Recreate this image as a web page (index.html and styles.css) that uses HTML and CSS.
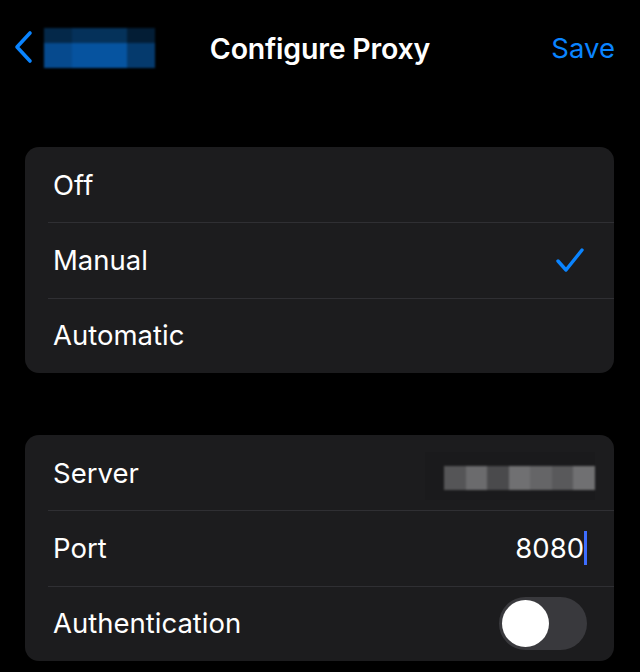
FILE: index.html
```html
<!DOCTYPE html>
<html>
<head>
<meta charset="utf-8">
<link rel="stylesheet" href="styles.css">
</head>
<body>
<div class="screen">
  <header class="nav">
    <div class="nav-left">
      <svg class="chevron" width="22" height="34" viewBox="0 0 22 34"><path d="M18 3 L5 17 L18 31" fill="none" stroke="#0a84ff" stroke-width="3.6" stroke-linecap="round" stroke-linejoin="round"/></svg>
      <div class="blur-blue">
        <div class="bb-row top"><span class="c1"></span><span class="c2"></span><span class="c3"></span><span class="c4"></span></div>
        <div class="bb-row bot"><span class="c5"></span><span class="c6"></span><span class="c7"></span><span class="c8"></span></div>
      </div>
    </div>
    <div class="nav-title">Configure Proxy</div>
    <div class="nav-save">Save</div>
  </header>

  <section class="group first">
    <div class="row"><span class="label">Off</span></div>
    <div class="row"><span class="label">Manual</span>
      <svg class="check" width="30" height="28" viewBox="0 0 30 28"><path d="M3 15 L11 24 L27 4" fill="none" stroke="#0a84ff" stroke-width="3.4" stroke-linecap="round" stroke-linejoin="round"/></svg>
    </div>
    <div class="row"><span class="label">Automatic</span></div>
  </section>

  <section class="group second">
    <div class="row"><span class="label">Server</span>
      <div class="server-box"><div class="server-blur"><span class="g1"></span><span class="g2"></span><span class="g3"></span><span class="g4"></span><span class="g5"></span><span class="g6"></span><span class="g7"></span></div></div>
    </div>
    <div class="row"><span class="label">Port</span>
      <span class="value">8080<span class="cursor"></span></span>
    </div>
    <div class="row"><span class="label">Authentication</span>
      <div class="toggle"><div class="knob"></div></div>
    </div>
  </section>
</div>
</body>
</html>
```
FILE: styles.css
```css
html, body {
  margin: 0;
  padding: 0;
  background: #000;
}
.screen {
  width: 640px;
  height: 672px;
  overflow: hidden;
  background: #000;
  font-family: Inter, "Noto Sans", sans-serif;
  color: #fff;
}
.nav {
  display: grid;
  grid-template-columns: 1fr auto 1fr;
  align-items: center;
  padding: 0 26px 0 12px;
  box-sizing: border-box;
  height: 96px;
}
.nav-left {
  display: flex;
  align-items: center;
  gap: 10px;
}
.chevron { display: block; margin-top: -2px; }
.blur-blue {
  width: 111px;
  height: 40px;
  display: flex;
  flex-direction: column;
  filter: blur(1px);
}
.bb-row { display: flex; flex: 1; }
.bb-row span { flex: 1; }
.bb-row.top { flex: 0 0 15px; }
.c1 { background: #042849; }
.c2 { background: #05315a; }
.c3 { background: #05325a; }
.c4 { background: #031d35; }
.c5 { background: #064a8e; }
.c6 { background: #06539f; }
.c7 { background: #0654a0; }
.c8 { background: #053a6d; }
.nav-title {
  font-size: 28.5px;
  font-weight: 600;
  letter-spacing: -0.2px;
  text-align: center;
  margin-left: 14px;
}
.nav-save {
  text-align: right;
  font-size: 27.5px;
  color: #0a84ff;
  margin-right: -1px;
}
.group {
  margin: 0 26px 0 25px;
  background: #1c1c1e;
  border-radius: 14px;
  overflow: hidden;
}
.group.first { margin-top: 51px; }
.group.second { margin-top: 62px; }
.row {
  height: 75.33px;
  display: flex;
  align-items: center;
  justify-content: space-between;
  padding: 0 27px 0 28px;
  box-sizing: border-box;
  position: relative;
}
.row + .row::before {
  content: "";
  position: absolute;
  top: 0;
  left: 23px;
  right: 0;
  height: 1px;
  background: #2f2f33;
}
.label {
  font-size: 27.5px;
  color: #fff;
}
.check { display: block; margin-right: 2px; }
.server-box {
  width: 170px;
  height: 48px;
  background: #1a1a1c;
  display: flex;
  align-items: center;
  justify-content: flex-end;
  margin-right: -8px;
  margin-top: 6px;
}
.server-blur {
  width: 151px;
  height: 24px;
  display: flex;
  filter: blur(0.8px);
  margin-top: 4px;
}
.server-blur span { flex: 1; }
.g1 { background: #555557; }
.g2 { background: #6b6b6d; }
.g3 { background: #4a4a4c; }
.g4 { background: #707072; }
.g5 { background: #656567; }
.g6 { background: #59595b; }
.g7 { background: #707072; }
.value {
  font-size: 27.5px;
  color: #fff;
  display: flex;
  align-items: center;
}
.cursor {
  display: inline-block;
  width: 3px;
  height: 34px;
  background: #3d6dff;
}
.toggle {
  width: 88px;
  height: 53px;
  border-radius: 27px;
  background: #39393d;
  padding: 3px;
  box-sizing: border-box;
}
.knob {
  width: 47px;
  height: 47px;
  border-radius: 50%;
  background: #fff;
}
```
